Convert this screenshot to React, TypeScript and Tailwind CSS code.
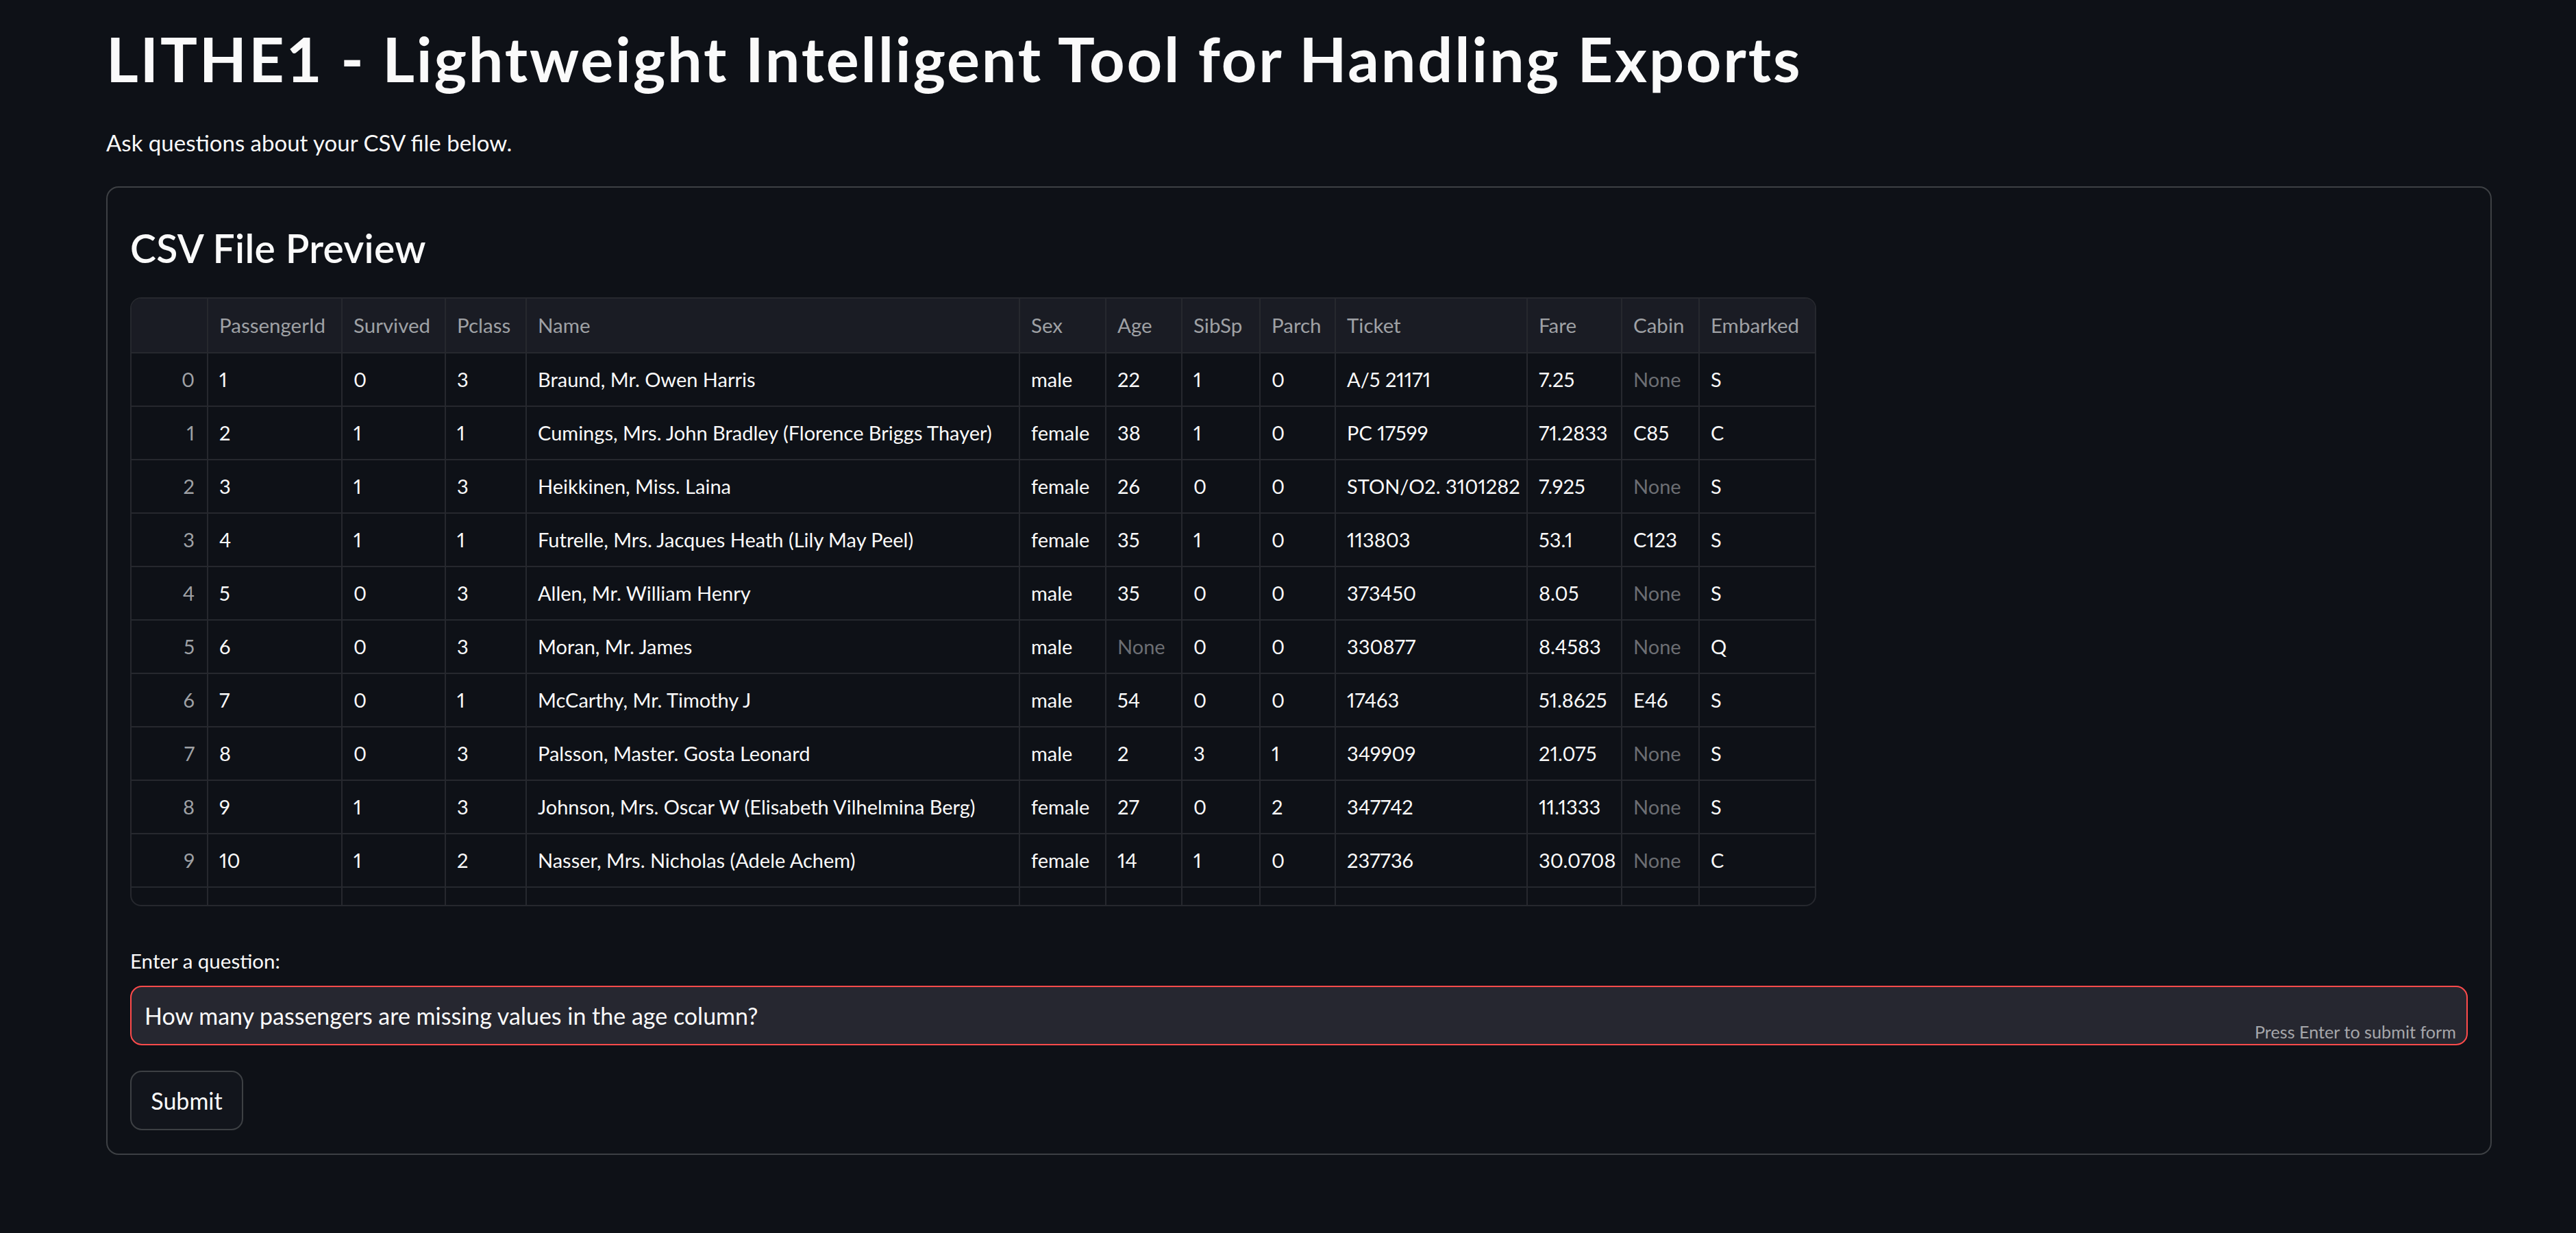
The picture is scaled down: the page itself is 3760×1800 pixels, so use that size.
import React from "react";

type Row = (string | number | null)[];

const headers = [
  "",
  "PassengerId",
  "Survived",
  "Pclass",
  "Name",
  "Sex",
  "Age",
  "SibSp",
  "Parch",
  "Ticket",
  "Fare",
  "Cabin",
  "Embarked",
];

const rows: Row[] = [
  [0, 1, 0, 3, "Braund, Mr. Owen Harris", "male", 22, 1, 0, "A/5 21171", "7.25", null, "S"],
  [1, 2, 1, 1, "Cumings, Mrs. John Bradley (Florence Briggs Thayer)", "female", 38, 1, 0, "PC 17599", "71.2833", "C85", "C"],
  [2, 3, 1, 3, "Heikkinen, Miss. Laina", "female", 26, 0, 0, "STON/O2. 3101282", "7.925", null, "S"],
  [3, 4, 1, 1, "Futrelle, Mrs. Jacques Heath (Lily May Peel)", "female", 35, 1, 0, "113803", "53.1", "C123", "S"],
  [4, 5, 0, 3, "Allen, Mr. William Henry", "male", 35, 0, 0, "373450", "8.05", null, "S"],
  [5, 6, 0, 3, "Moran, Mr. James", "male", null, 0, 0, "330877", "8.4583", null, "Q"],
  [6, 7, 0, 1, "McCarthy, Mr. Timothy J", "male", 54, 0, 0, "17463", "51.8625", "E46", "S"],
  [7, 8, 0, 3, "Palsson, Master. Gosta Leonard", "male", 2, 3, 1, "349909", "21.075", null, "S"],
  [8, 9, 1, 3, "Johnson, Mrs. Oscar W (Elisabeth Vilhelmina Berg)", "female", 27, 0, 2, "347742", "11.1333", null, "S"],
  [9, 10, 1, 2, "Nasser, Mrs. Nicholas (Adele Achem)", "female", 14, 1, 0, "237736", "30.0708", null, "C"],
  [10, 11, 1, 3, "Sandstrom, Miss. Marguerite Rut", "female", 4, 1, 1, "PP 9549", "16.7", "G6", "S"],
];

function HeaderCell({ label, last }: { label: string; last: boolean }) {
  return (
    <div
      className={
        "h-[80px] flex items-center pl-[16px] bg-[#1a1c24] text-[#9fa1a5] text-[29.5px] leading-[34px] whitespace-nowrap overflow-hidden border-b-2 border-[#26282e] " +
        (last ? "" : "border-r-2")
      }
    >
      {label}
    </div>
  );
}

function DataCell({
  value,
  index,
  last,
}: {
  value: string | number | null;
  index: boolean;
  last: boolean;
}) {
  const isNone = value === null;
  let cls =
    "h-[78px] flex items-center text-[29px] leading-[34px] proportional-nums whitespace-nowrap overflow-hidden border-b-2 border-[#26282e] ";
  if (!last) cls += "border-r-2 ";
  if (index) cls += "justify-end pr-[18px] text-[#9fa1a5] ";
  else cls += "pl-[16px] ";
  if (!index) cls += isNone ? "text-[#6c6e73] " : "text-[#fafafa] ";
  return <div className={cls}>{isNone ? "None" : String(value)}</div>;
}

export default function App() {
  return (
    <div className="min-h-[1800px] w-full bg-[#0e1117] text-[#fafafa] font-['Lato','Noto_Sans',sans-serif]">
      <div className="ml-[155px] w-[3482px] pt-[31px] flex flex-col">
        <h1 className="text-[90px] leading-[108px] font-bold tracking-[2.8px] text-[#fafafa]">
          LITHE1 - Lightweight Intelligent Tool for Handling Exports
        </h1>
        <p className="mt-[50px] text-[33px] leading-[38px] text-[#fafafa]">
          Ask questions about your CSV file below.
        </p>

        <div className="mt-[45px] border-2 border-[#3d4044] rounded-[18px] pl-[33px] pr-[33px] pt-[55px] pb-[34px] flex flex-col">
          <h3 className="text-[57px] leading-[67px] font-semibold tracking-[0.3px] text-[#fafafa]">
            CSV File Preview
          </h3>

          <div className="mt-[38px] w-[2461px] h-[889px] border-2 border-[#26282e] rounded-[16px] overflow-hidden bg-[#0e1117]">
            <div className="grid grid-cols-[112px_196px_151px_118px_720px_126px_111px_114px_110px_280px_138px_113px_168px]">
              {headers.map((h, i) => (
                <HeaderCell key={"h" + i} label={h} last={i === headers.length - 1} />
              ))}
              {rows.map((r, ri) =>
                r.map((v, ci) => (
                  <DataCell
                    key={ri + "-" + ci}
                    value={v}
                    index={ci === 0}
                    last={ci === r.length - 1}
                  />
                ))
              )}
            </div>
          </div>

          <label className="mt-[63px] text-[29.5px] leading-[34px] text-[#fafafa]">
            Enter a question:
          </label>

          <div className="relative mt-[19px] h-[87px] w-full border-2 border-[#ff4b4b] rounded-[17px] bg-[#262730] flex items-center pl-[19px]">
            <span className="text-[34px] leading-[40px] text-[#fafafa] whitespace-nowrap">
              How many passengers are missing values in the age column?
            </span>
            <span className="absolute right-[15px] bottom-[5px] text-[25.2px] leading-[25px] text-[#a5a6aa] whitespace-nowrap">
              Press Enter to submit form
            </span>
          </div>

          <div className="mt-[37px]">
            <button className="w-[165px] h-[87px] border-2 border-[#3d4044] rounded-[17px] bg-[#12151c] text-[34px] leading-[40px] text-[#fafafa] flex items-center justify-center">
              Submit
            </button>
          </div>
        </div>
      </div>
    </div>
  );
}
